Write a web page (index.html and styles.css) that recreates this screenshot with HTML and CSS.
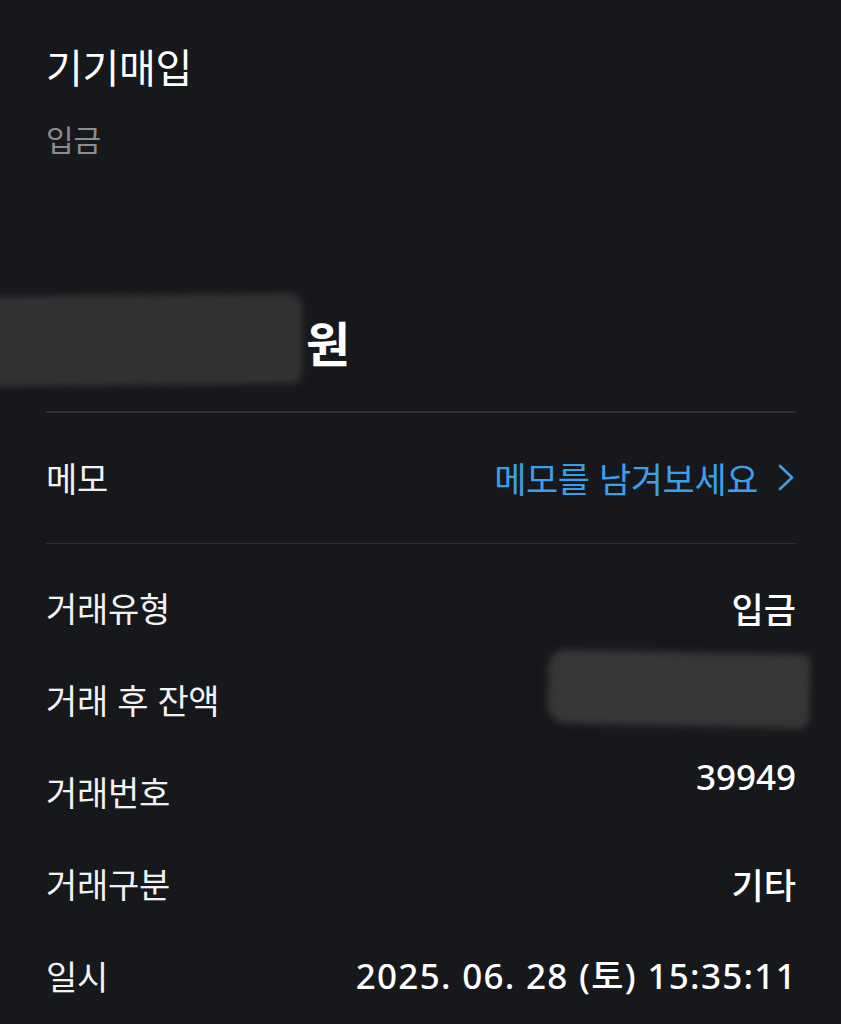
FILE: index.html
```
<!DOCTYPE html>
<html lang="ko">
<head>
<meta charset="utf-8">
<link rel="stylesheet" href="styles.css">
</head>
<body>
<div class="page">
  <header class="head">
    <h1 class="title">기기매입</h1>
    <div class="sub">입금</div>
  </header>
  <div class="amount">
    <div class="smudge smudge-a"></div>
    <span class="amount-unit">원</span>
  </div>
  <div class="divider"></div>
  <div class="memo-row">
    <span class="label">메모</span>
    <a class="memo-link">메모를 남겨보세요
      <svg class="chev" width="16" height="27" viewBox="0 0 16 27"><path d="M2 2 L14 13.5 L2 25" fill="none" stroke="#3ba0ea" stroke-width="2.6" stroke-linecap="round" stroke-linejoin="round"/></svg>
    </a>
  </div>
  <div class="divider"></div>
  <div class="rows">
    <div class="row"><span class="label">거래유형</span><span class="value">입금</span></div>
    <div class="row"><span class="label">거래 후 잔액</span><span class="value faint">원</span><div class="smudge smudge-b"></div></div>
    <div class="row"><span class="label">거래번호</span><span class="value num value-high">39949</span></div>
    <div class="row"><span class="label">거래구분</span><span class="value">기타</span></div>
    <div class="row"><span class="label">일시</span><span class="value num date">2025. 06. 28 (토) 15:35:11</span></div>
  </div>
</div>
</body>
</html>
```

FILE: styles.css
```
html, body {
  margin: 0;
  padding: 0;
  background: #17181c;
}
body {
  font-family: "Noto Sans CJK KR", "Noto Sans", sans-serif;
  color: #f4f4f5;
  overflow: hidden;
}
.page {
  padding: 44px 45px 0 46px;
  position: relative;
}
.head {
  display: flex;
  flex-direction: column;
}
.title {
  margin: 0;
  font-size: 40px;
  line-height: 44px;
  font-weight: 400;
  letter-spacing: -0.3px;
  color: #ffffff;
}
.sub {
  margin-top: 30px;
  font-size: 30px;
  line-height: 40px;
  font-weight: 400;
  color: #8c8d92;
}
.amount {
  position: relative;
  margin-top: 153px;
  height: 60px;
  display: flex;
  align-items: center;
  font-size: 48px;
  font-weight: 700;
  line-height: 60px;
}
.amount-unit {
  color: #ffffff;
  margin-left: 260px;
  position: relative;
}
.smudge {
  position: absolute;
  background: #323232;
  filter: blur(3.5px);
}
.smudge-a {
  left: -52px;
  top: -16px;
  width: 308px;
  height: 90px;
  border-radius: 6px 14px 10px 4px;
  transform: skewY(-0.6deg);
}
.smudge-b {
  right: -14px;
  top: -2px;
  width: 262px;
  height: 74px;
  border-radius: 18px 8px 10px 20px;
  background: #363636;
  transform: rotate(1.2deg);
}
.divider {
  height: 1.5px;
  background: #2e2f34;
}
.amount + .divider {
  margin-top: 40px;
}
.memo-row {
  height: 130px;
  display: flex;
  align-items: center;
  justify-content: space-between;
}
.label {
  font-size: 34px;
  line-height: 40px;
  font-weight: 400;
  color: #f2f2f3;
  letter-spacing: -0.3px;
}
.memo-link {
  display: flex;
  align-items: center;
  gap: 20px;
  font-size: 35px;
  line-height: 40px;
  font-weight: 400;
  color: #3ba0ea;
  letter-spacing: -0.4px;
  margin-right: 2px;
}
.chev {
  display: block;
}
.rows {
  padding-top: 18px;
}
.row {
  position: relative;
  height: 92px;
  display: flex;
  align-items: center;
  justify-content: space-between;
}
.value {
  font-size: 35px;
  line-height: 40px;
  font-weight: 500;
  color: #ffffff;
}
.num {
  font-family: "Noto Sans", "Noto Sans CJK KR", sans-serif;
}
.faint {
  color: #363636;
}
.date {
  letter-spacing: 1.3px;
  margin-right: -1px;
}
.value-high {
  align-self: flex-start;
  margin-top: 11px;
}
```
